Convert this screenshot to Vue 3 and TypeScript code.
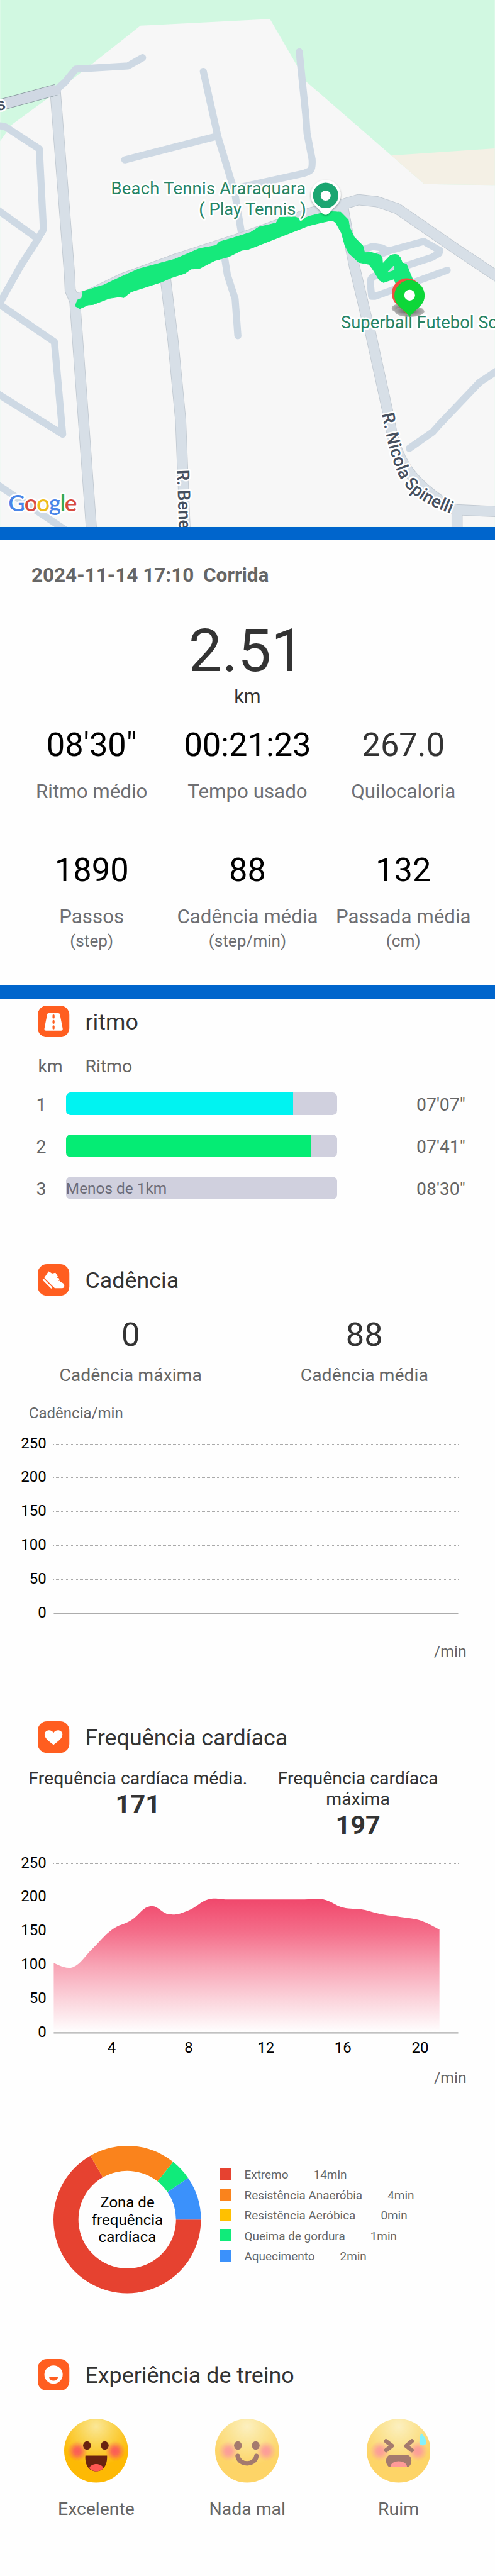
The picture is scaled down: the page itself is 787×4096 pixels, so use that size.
<script setup lang="ts">
interface Stat { value: string; label: string; unit?: string; dark?: boolean }
interface Pace { km: number; time: string; seconds: number; kind: string; note?: string }
interface Zone { name: string; minutes: number; color: string }

const totals: Stat[][] = [
  [
    { value: '08\'30"', label: 'Ritmo médio' },
    { value: '00:21:23', label: 'Tempo usado' },
    { value: '267.0', label: 'Quilocaloria', dark: true },
  ],
  [
    { value: '1890', label: 'Passos', unit: '(step)' },
    { value: '88', label: 'Cadência média', unit: '(step/min)' },
    { value: '132', label: 'Passada média', unit: '(cm)' },
  ],
]

const slowest = 510
const paces: Pace[] = [
  { km: 1, time: '07\'07"', seconds: 427, kind: 'fast' },
  { km: 2, time: '07\'41"', seconds: 461, kind: 'good' },
  { km: 3, time: '08\'30"', seconds: 0, kind: 'none', note: 'Menos de 1km' },
]

const cadence: Stat[] = [
  { value: '0', label: 'Cadência máxima' },
  { value: '88', label: 'Cadência média' },
]

const heart: Stat[] = [
  { value: '171', label: 'Frequência cardíaca média.' },
  { value: '197', label: 'Frequência cardíaca\nmáxima' },
]

// Chart geometry shared by both line charts
const zeroY = 423.4
const perUnit = 1.479
const left = 117
const right = 1000
const ticks = [250, 200, 150, 100, 50, 0]
const yOf = (v: number): number => zeroY - v * perUnit
const xOf = (minute: number): number => left + (minute - 1) * 42.1

const bpm = [103, 97, 124, 152, 166, 187, 175, 181, 197, 197, 197, 197, 197, 197, 197, 185, 182, 175, 171, 166, 152.5]
const minuteTicks = [4, 8, 12, 16, 20]

function smoothArea(values: number[]): string {
  const p = values.map((v, i) => ({ x: xOf(i + 1), y: yOf(v) }))
  const k = 0.2
  let d = `M${p[0].x},${p[0].y}`
  for (let i = 1; i < p.length; i++) {
    const a = p[Math.max(i - 2, 0)]
    const b = p[i - 1]
    const c = p[i]
    const e = p[Math.min(i + 1, p.length - 1)]
    d += `C${b.x + (c.x - a.x) * k},${b.y + (c.y - a.y) * k} ${c.x - (e.x - b.x) * k},${c.y - (e.y - b.y) * k} ${c.x},${c.y}`
  }
  return `${d}L${p[p.length - 1].x},${zeroY}L${left},${zeroY}Z`
}
const area = smoothArea(bpm)

const zones: Zone[] = [
  { name: 'Extremo', minutes: 14, color: '#e64230' },
  { name: 'Resistência Anaeróbia', minutes: 4, color: '#fa831c' },
  { name: 'Resistência Aeróbica', minutes: 0, color: '#ffc000' },
  { name: 'Queima de gordura', minutes: 1, color: '#10eb7a' },
  { name: 'Aquecimento', minutes: 2, color: '#3b91fb' },
]

const total = zones.reduce((s, z) => s + z.minutes, 0)
let angle = 0
const slices = zones.filter(z => z.minutes > 0).map((z) => {
  const from = angle
  angle += (z.minutes / total) * Math.PI * 2
  const R = 161
  const r = 106.5
  const at = (rad: number, a: number): string => `${161 + rad * Math.cos(a)},${161 + rad * Math.sin(a)}`
  const big = angle - from > Math.PI ? 1 : 0
  return {
    color: z.color,
    d: `M${at(R, from)}A${R},${R} 0 ${big} 1 ${at(R, angle)}L${at(r, angle)}A${r},${r} 0 ${big} 0 ${at(r, from)}Z`,
  }
})

const localRoads = [
  'M120,198L141,180L165,151L279,144L311,126',
  'M443.6,156L475,297L512,420L527,510',
  'M490,562L496,600L513,653L519,733',
  'M272,349L475,297',
  'M653,113L667,249L670,291L681,348Q682,366 678,371Q674,375 661,379L537,406L510,411',
  'M-10,274L3,275Q12,276 18,281L85.5,325L94.5,501L81,524L45,580L-2,664L118.5,746.5L136.5,948L0,863L-10,857',
  'M-10,455L79,519',
  'M-10,1055L0,1062L150,1162',
  'M1090,806L1047,834.5L961,924.5L944,943.6L893,979',
  'M793,545L813,538L833,541L847,548L925,527L960,547L958,553L943,561.7L820,602Q808,605 808,617L811,647L818,647L976,590',
  'M847,548L825,558',
]
const mainRoads = [
  'M120.5,200L151.5,600L153,634L163,657L200,1165',
  'M158,652Q178,650 195,643L265,609L385,565L530,518L680,464L751.7,445L781.7,436L823,440.5L867,455.5L1000,547L1090,607',
  'M350,585L361.6,614L377.5,745L394,917L404,1165',
  'M748,450L758,505L773,580L799,690L809,729L846,898L855,945C868,1000 890,1040 944,1081Q980,1108 995,1113L1090,1117',
  'M997.5,1112L997.5,1165',
]
const track = 'M164,668L168.7,655.4L178,651L180.5,636.6L227,622L255,608.7L303,587L382,565.6L435,542.7L472,535.8L478.7,528L509.7,519L547.6,507L565,495.6L602.7,486.8L609.6,474.5L644,473.8L658,479L676.7,471.7L716.7,461.7L743,463L760,480L763,496.7L773,518L791.7,536.7L795.7,551.7L810,551L830,556.7L834,563L835,576L851.7,558Q861,554 868,556.7L873,561.7L878,574L886.7,576.7L900,609L896,625L866,625L860,609L836.7,616.7L828,611.7L811.7,585L805,577L783,572.7L761.7,553L753,536.7L745,508L733,486.7Q728,481 720,482L696.7,487L673,493L660,498L541,544.6L527,546.5L499,560.6L468,569L434,586.7L416.7,587.4L403,597L375,606L351,616L286,637L270,649.7L260,648L237.6,651.6L203,665L191.5,666L174,673.8ZM860,578L841.7,596.7L861.7,590Z'
</script>

<template>
  <main class="page">
    <svg class="map" viewBox="0 0 1080 1150">
      <defs>
        <radialGradient id="pinShade">
          <stop offset="0" stop-color="#222" />
          <stop offset="0.45" stop-color="#777" />
          <stop offset="1" stop-color="#a9a9a9" />
        </radialGradient>
        <filter id="soft" x="-30%" y="-30%" width="160%" height="160%">
          <feDropShadow dx="0" dy="2" stdDeviation="2.5" flood-opacity="0.35" />
        </filter>
        <path id="nicola" d="M833,904L845,960Q856,1005 869,1036Q881,1060 900,1077Q928,1101 984,1122L1020,1136" />
        <path id="bene" d="M386,1026L393,1240" />
      </defs>
      <rect width="1080" height="1150" fill="#d1f8e1" />
      <path fill="#f7f7f7" d="M306.5,56L589,41.7L649,145L668,178L854,339.5L926,402L1080,404V1150H0V308L26,272L110,210L200,140Z" />
      <path fill="#f4f0e5" d="M854,339.5L1080,324V404L926,402Z" />
      <g class="road road-local"><path v-for="d in localRoads" :key="d" :d="d" /></g>
      <g class="road road-edge"><path v-for="d in mainRoads" :key="d" :d="d" /></g>
      <g class="road road-main"><path v-for="d in mainRoads" :key="d" :d="d" /></g>
      <path d="M-10,232L122,196" fill="none" stroke="#8b9aa0" stroke-width="25" />
      <path d="M-10,232L122,196" fill="none" stroke="#d0d8e3" stroke-width="22.5" />
      <circle cx="123" cy="198" r="10" fill="#d0d8e3" />
      <path :d="track" fill="#16e97b" fill-rule="evenodd" stroke="#16e97b" stroke-width="1.5" stroke-linejoin="round" />
      <g class="place">
        <text x="242" y="424" textLength="425">Beach Tennis Araraquara</text>
        <text x="668" y="469" text-anchor="end">( Play Tennis )</text>
        <text x="744" y="716.5">Superball Futebol So</text>
      </g>
      <g class="street">
        <text><textPath href="#nicola" textLength="284">R. Nicola Spinelli</textPath></text>
        <text><textPath href="#bene">R. Bened</textPath></text>
        <text x="-6" y="241" transform="rotate(-14 0 240)">s</text>
      </g>
      <g filter="url(#soft)">
        <path fill="#fff" d="M710.7,469C702,469 699,458 689,450A32.7,32.7 0 1 1 732.5,450C722,458 719,469 710.7,469Z" />
      </g>
      <circle cx="710.7" cy="426.7" r="27.7" fill="#1ba671" />
      <circle cx="710.7" cy="427" r="11" fill="#fff" />
      <ellipse cx="879" cy="673" rx="24" ry="11" fill="url(#pinShade)" opacity="0.85" />
      <ellipse cx="894" cy="680" rx="32" ry="12" fill="url(#pinShade)" opacity="0.85" />
      <path fill="#f0503f" d="M888,687C884,679 866,667 860,658A33,33 0 1 1 915.5,659C909,667 892,679 888,687Z" />
      <path fill="#0dd739" d="M894,692.5C890,684 872,672 866,663A33,33 0 1 1 921.5,663C915,672 898,684 894,692.5Z" />
      <circle cx="894" cy="644.5" r="11.7" fill="#fff" />
      <text class="google" x="18" y="1116" textLength="150"><tspan fill="#4a86e8">G</tspan><tspan fill="#d84b3e">o</tspan><tspan fill="#eebd1c">o</tspan><tspan fill="#4a86e8">g</tspan><tspan fill="#3ba757">l</tspan><tspan fill="#d84b3e">e</tspan></text>
    </svg>

    <section class="summary">
      <h1 class="title"><span>2024-11-14 17:10</span><span>Corrida</span></h1>
      <div class="distance">2.51</div>
      <div class="distance-unit">km</div>
      <div v-for="(row, i) in totals" :key="i" class="totals">
        <div v-for="s in row" :key="s.label" class="total">
          <div class="total-value" :class="{ dark: s.dark }">{{ s.value }}</div>
          <div class="total-label">{{ s.label }}</div>
          <div v-if="s.unit" class="total-unit">{{ s.unit }}</div>
        </div>
      </div>
    </section>

    <section class="pace">
      <h2 class="heading">
        <svg class="badge" viewBox="0 0 69 69">
          <rect width="69" height="69" rx="20" fill="#ff5e20" />
          <path fill="#fff" d="M24,16.5H45Q48,16.5 48.5,19.5L54.5,50Q55,54.5 51,54.5H18Q14,54.5 14.5,50L20.5,19.5Q21,16.5 24,16.5Z" />
          <path stroke="#ff5e20" stroke-width="4.5" stroke-linecap="round" d="M34.5,21.5V26M34.5,33.5V37.5M34.5,45V49.5" />
        </svg>
        <span>ritmo</span>
      </h2>
      <div class="pace-head"><span>km</span><span>Ritmo</span></div>
      <div v-for="p in paces" :key="p.km" class="pace-row">
        <span class="pace-km">{{ p.km }}</span>
        <div class="bar" :class="p.kind">
          <div class="bar-fill" :style="{ width: (p.seconds / slowest) * 100 + '%' }"></div>
          <span v-if="p.note" class="bar-note">{{ p.note }}</span>
        </div>
        <span class="pace-time">{{ p.time }}</span>
      </div>
    </section>

    <section class="cadence">
      <h2 class="heading">
        <svg class="badge" viewBox="0 0 69 69">
          <rect width="69" height="69" rx="20" fill="#ff5e20" />
          <path fill="#fff" stroke="#fff" stroke-width="2" stroke-linejoin="round" d="M24,17L31,21.5L38.5,20L43,27.5L37,32L45,31L46,34L38.5,38.5L47.5,37.5L49,40Q57,42 57,47Q57,51.5 53,51.5H37.5L15.5,30Z" />
          <path stroke="#fff" stroke-width="3.5" stroke-linecap="round" d="M12.5,34L30,51.5" />
        </svg>
        <span>Cadência</span>
      </h2>
      <div class="pair">
        <div v-for="s in cadence" :key="s.label">
          <div class="pair-value">{{ s.value }}</div>
          <div class="pair-label">{{ s.label }}</div>
        </div>
      </div>
      <div class="axis-title">Cadência/min</div>
      <svg class="chart chart-cadence" viewBox="0 0 1080 540">
        <g v-for="t in ticks" :key="t">
          <line :class="t ? 'grid' : 'base'" :x1="left" :x2="right" :y1="yOf(t)" :y2="yOf(t)" />
          <text class="tick" x="101" :y="yOf(t) + 9" text-anchor="end">{{ t }}</text>
        </g>
        <text class="unit" x="1018" y="517" text-anchor="end">/min</text>
      </svg>
    </section>

    <section class="heart">
      <h2 class="heading">
        <svg class="badge" viewBox="0 0 69 69">
          <rect width="69" height="69" rx="20" fill="#ff5e20" />
          <path fill="#fff" d="M34.5,52C31,47 15,40 15,29C15,18.5 29,16 34.5,25C40,16 54,18.5 54,29C54,40 38,47 34.5,52Z" />
        </svg>
        <span>Frequência cardíaca</span>
      </h2>
      <div class="rates">
        <div v-for="s in heart" :key="s.label">
          <div class="rate-label">{{ s.label }}</div>
          <div class="rate-value">{{ s.value }}</div>
        </div>
      </div>
      <svg class="chart chart-heart" viewBox="0 0 1080 560">
        <defs>
          <linearGradient id="pulse" x1="0" y1="0" x2="0" y2="1">
            <stop offset="0" stop-color="#f0476b" />
            <stop offset="0.25" stop-color="#f46e8a" />
            <stop offset="0.5" stop-color="#f8a4b5" />
            <stop offset="0.75" stop-color="#fbd3db" />
            <stop offset="1" stop-color="#ffffff" />
          </linearGradient>
        </defs>
        <path :d="area" fill="url(#pulse)" />
        <g v-for="t in ticks" :key="t">
          <line :class="t ? 'grid' : 'base'" :x1="left" :x2="right" :y1="yOf(t)" :y2="yOf(t)" />
          <text class="tick" x="101" :y="yOf(t) + 9" text-anchor="end">{{ t }}</text>
        </g>
        <text v-for="m in minuteTicks" :key="m" class="tick" :x="xOf(m)" y="467" text-anchor="middle">{{ m }}</text>
        <text class="unit" x="1018" y="533" text-anchor="end">/min</text>
      </svg>
      <div class="zones">
        <div class="donut">
          <svg viewBox="0 0 322 322"><path v-for="s in slices" :key="s.color" :d="s.d" :fill="s.color" /></svg>
          <div class="donut-text">Zona de<br>frequência<br>cardíaca</div>
        </div>
        <ul class="legend">
          <li v-for="z in zones" :key="z.name">
            <i class="swatch" :style="{ background: z.color }"></i>
            <span class="zone-name">{{ z.name }}</span>
            <span>{{ z.minutes }}min</span>
          </li>
        </ul>
      </div>
    </section>

    <section class="feeling">
      <h2 class="heading">
        <svg class="badge" viewBox="0 0 69 69">
          <rect width="69" height="69" rx="20" fill="#ff5e20" />
          <circle cx="34.5" cy="34" r="20" fill="#fff" />
          <path fill="#ff5e20" d="M24.5,38.5H44.5Q43,47.5 34.5,47.5Q26,47.5 24.5,38.5Z" />
        </svg>
        <span>Experiência de treino</span>
      </h2>
      <svg class="defs" width="0" height="0">
        <defs>
          <radialGradient id="skin" cx="0.5" cy="0.12" r="0.62">
            <stop offset="0" stop-color="#fbe797" />
            <stop offset="0.45" stop-color="#fad34f" />
            <stop offset="1" stop-color="#fdb904" />
          </radialGradient>
          <radialGradient id="blush">
            <stop offset="0" stop-color="#fb5a58" />
            <stop offset="0.35" stop-color="#fb5a58" stop-opacity="0.85" />
            <stop offset="1" stop-color="#fb6a50" stop-opacity="0" />
          </radialGradient>
        </defs>
      </svg>
      <div class="faces">
        <div class="face">
          <svg viewBox="0 0 140 140">
            <circle cx="70" cy="70" r="70" fill="url(#skin)" />
            <circle cx="29" cy="71" r="22" fill="url(#blush)" />
            <circle cx="112" cy="71" r="22" fill="url(#blush)" />
            <ellipse cx="50" cy="58.5" rx="8.5" ry="9.2" fill="#692310" />
            <ellipse cx="89" cy="58.5" rx="8.5" ry="9.2" fill="#692310" />
            <path fill="#692310" d="M46.5,80.5H94C95,101 86,115 70,115C54,115 45,101 46.5,80.5Z" />
            <path fill="#ff5853" d="M55,108.5C58,96 83,96 86,108.5Q79,115 70.5,115Q62,115 55,108.5Z" />
          </svg>
          <span>Excelente</span>
        </div>
        <div class="face">
          <svg viewBox="0 0 140 140" opacity="0.6">
            <circle cx="70" cy="70" r="70" fill="url(#skin)" />
            <circle cx="29" cy="71" r="22" fill="url(#blush)" />
            <circle cx="112" cy="71" r="22" fill="url(#blush)" />
            <ellipse cx="50" cy="58.5" rx="8.5" ry="9.2" fill="#692310" />
            <ellipse cx="89" cy="58.5" rx="8.5" ry="9.2" fill="#692310" />
            <path fill="none" stroke="#692310" stroke-width="10" stroke-linecap="round" d="M49.5,81.5C52,103 88,103 90.5,81.5" />
          </svg>
          <span>Nada mal</span>
        </div>
        <div class="face">
          <svg viewBox="0 0 140 140">
            <g opacity="0.6">
              <circle cx="70" cy="70" r="70" fill="url(#skin)" />
              <circle cx="29" cy="71" r="22" fill="url(#blush)" />
              <circle cx="112" cy="71" r="22" fill="url(#blush)" />
              <path fill="none" stroke="#692310" stroke-width="9" stroke-linecap="round" stroke-linejoin="round" d="M42.5,49L55.5,59L42.5,69M99,49L86.5,59.5L99,69" />
              <path fill="#692310" d="M55,78.5H85C93,78.5 98,84 98,92Q98,100 92,105.5H48.5Q42.5,100 42.5,92C42.5,84 47,78.5 55,78.5Z" />
              <path fill="#ff5853" d="M52,105.5C53,89 87,89 88.5,105.5Z" />
            </g>
            <path fill="#84f1fb" d="M119,31C127,39 131,46 130.5,51.5C130,61 116,61 115.5,51.5Q115.5,43 119,31Z" />
          </svg>
          <span>Ruim</span>
        </div>
      </div>
    </section>
  </main>
</template>

<style>
html {
  font-size: 72.83px;
}
body {
  margin: 0;
  background: #fff;
}
</style>

<style scoped>
.page {
  width: 100%;
  height: 56.24rem;
  overflow: hidden;
  background: #fefefe;
  font-family: Roboto, "Liberation Sans", sans-serif;
  line-height: 1;
  color: #333;
}
svg {
  display: block;
}
.map {
  width: 100%;
  height: 11.5rem;
}
.road path {
  fill: none;
  stroke-linejoin: round;
}
.road-local {
  stroke: #ced9e4;
  stroke-width: 15.5;
  stroke-linecap: round;
}
.road-edge {
  stroke: #c2cad2;
  stroke-width: 24;
}
.road-main {
  stroke: #d7dfe7;
  stroke-width: 21.5;
}
.place text,
.street text,
.google {
  paint-order: stroke;
  stroke: #fff;
  stroke-width: 7px;
  stroke-linejoin: round;
}
.place text {
  font-size: 37.5px;
  fill: #278465;
}
.street text {
  font-size: 38px;
  font-weight: 500;
  fill: #46505f;
}
.google {
  font-family: Lato, sans-serif;
  font-size: 51px;
  font-weight: 600;
}
.summary {
  box-sizing: border-box;
  height: 10.3rem;
  border-top: 0.3rem solid #0065cc;
  border-bottom: 0.3rem solid #0065cc;
  padding: 0.55rem 0.3rem 0;
  text-align: center;
}
.title {
  display: flex;
  gap: 0.2rem;
  margin: 0 0 0.79rem 0.385rem;
  font-size: 0.433rem;
  font-weight: 700;
  color: #666;
}
.distance {
  margin-right: 0.04rem;
  font-size: 1.3rem;
}
.distance-unit {
  margin: 0.14rem 0 0.475rem;
  font-size: 0.42rem;
}
.totals {
  display: grid;
  grid-template-columns: repeat(3, 1fr);
  height: 2.73rem;
}
.total {
  white-space: nowrap;
}
.total-value {
  font-size: 0.72rem;
  color: #000;
}
.total-value.dark {
  color: #333;
}
.total-label {
  margin-top: 0.448rem;
  font-size: 0.43rem;
  color: #6e6f73;
}
.total-unit {
  margin-top: 0.135rem;
  font-size: 0.36rem;
  color: #6e6f73;
}
.heading {
  display: flex;
  align-items: center;
  gap: 0.34rem;
  height: 0.69rem;
  margin: 0;
  padding-left: 0.83rem;
  font-size: 0.492rem;
  font-weight: 400;
}
.heading span {
  padding-top: 0.055rem;
}
.badge {
  width: 0.69rem;
  height: 0.69rem;
}
.pace {
  padding-top: 0.157rem;
  color: #666;
}
.pace .heading {
  color: #333;
}
.pace-head {
  display: grid;
  grid-template-columns: 1.03rem 1fr;
  margin: 0.445rem 0 0.16rem 0.83rem;
  font-size: 0.39rem;
}
.pace-row {
  display: flex;
  align-items: center;
  height: 0.92rem;
  padding-left: 0.79rem;
  font-size: 0.39rem;
}
.pace-km {
  width: 0.65rem;
  padding-top: 0.065rem;
}
.pace-time {
  margin-left: 1.73rem;
  padding-top: 0.065rem;
}
.bar {
  display: flex;
  align-items: center;
  width: 5.92rem;
  height: 0.49rem;
  border-radius: 0.1rem;
  overflow: hidden;
  background: #d0d0de;
}
.bar-fill {
  height: 100%;
}
.fast .bar-fill {
  background: #00f3f1;
}
.good .bar-fill {
  background: #05ec74;
}
.bar-note {
  padding-top: 0.03rem;
  font-size: 0.335rem;
  color: #6c6c78;
}
.cadence {
  padding-top: 1.197rem;
}
.pair {
  display: grid;
  grid-template-columns: 1fr 1fr;
  margin-top: 0.495rem;
  padding: 0 0.3rem;
  text-align: center;
}
.pair-value {
  font-size: 0.72rem;
}
.pair-label {
  margin-top: 0.34rem;
  font-size: 0.39rem;
  color: #666;
}
.axis-title {
  margin: 0.449rem 0 0 0.63rem;
  font-size: 0.33rem;
  color: #666;
}
.chart {
  width: 100%;
}
.chart-cadence {
  height: 5.4rem;
  margin-top: -0.016rem;
}
.chart-heart {
  height: 5.6rem;
  margin-top: 0.014rem;
}
.grid {
  stroke: #aaa;
  stroke-width: 1.37;
  stroke-dasharray: 1.37 1.37;
  shape-rendering: crispEdges;
}
.base {
  stroke: #acacac;
  stroke-width: 3;
}
.tick {
  font-size: 33px;
  fill: #000;
}
.unit {
  font-size: 34px;
  fill: #666;
}
.heart {
  padding-top: 1.18rem;
}
.rates {
  display: grid;
  grid-template-columns: 1fr 1fr;
  height: 1.55rem;
  margin-top: 0.325rem;
  padding: 0 0.59rem 0 0.61rem;
  text-align: center;
}
.rate-label {
  font-size: 0.39rem;
  line-height: 0.46rem;
  white-space: pre;
}
.rate-value {
  margin-top: 0.05rem;
  font-size: 0.57rem;
  font-weight: 700;
}
.zones {
  display: flex;
  align-items: flex-start;
  margin-top: 1.101rem;
  padding-left: 1.17rem;
}
.donut {
  display: grid;
  place-items: center;
  width: 3.22rem;
  height: 3.22rem;
}
.donut > * {
  grid-area: 1 / 1;
}
.donut svg {
  width: 100%;
  height: 100%;
}
.donut-text {
  padding-top: 0.02rem;
  font-size: 0.33rem;
  line-height: 0.38rem;
  text-align: center;
  color: #000;
}
.legend {
  display: grid;
  grid-auto-rows: 0.265rem;
  row-gap: 0.182rem;
  margin: 0.48rem 0 0 0.4rem;
  padding: 0;
  list-style: none;
  font-size: 0.26rem;
  color: #666;
}
.legend li {
  display: flex;
  align-items: center;
}
.legend span {
  padding-top: 0.04rem;
}
.swatch {
  width: 0.265rem;
  height: 0.265rem;
  margin-right: 0.28rem;
}
.zone-name {
  margin-right: 0.55rem;
}
.feeling {
  padding-top: 1.43rem;
}
.defs {
  position: absolute;
}
.faces {
  display: grid;
  grid-template-columns: repeat(3, 3.3rem);
  margin-top: 0.615rem;
  padding-left: 0.45rem;
}
.face {
  display: flex;
  flex-direction: column;
  align-items: center;
  gap: 0.39rem;
  font-size: 0.39rem;
  color: #666;
}
.face svg {
  width: 1.395rem;
  height: 1.395rem;
}
</style>
